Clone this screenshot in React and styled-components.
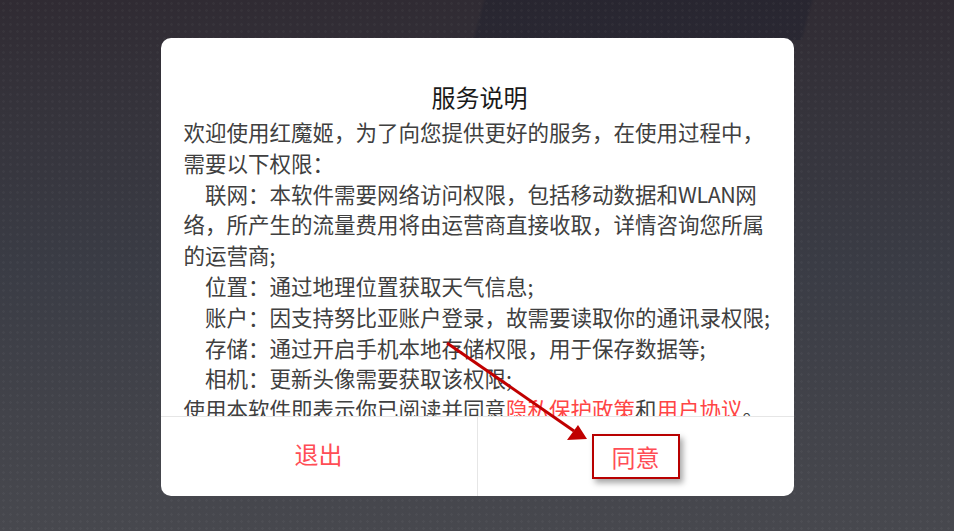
import React from "react";
import styled, { createGlobalStyle } from "styled-components";

const GlobalStyle = createGlobalStyle`
  html, body {
    margin: 0;
    padding: 0;
  }
  body {
    font-family: "Noto Sans CJK SC", "Noto Sans", sans-serif;
  }
`;

const Page = styled.div`
  position: relative;
  width: 954px;
  height: 531px;
  overflow: hidden;
  display: flex;
  justify-content: center;
  align-items: flex-start;
  padding-top: 38px;
  box-sizing: border-box;
  background:
    radial-gradient(circle, rgba(255, 255, 255, 0.03) 1px, transparent 1.6px) 0 0 / 7px 7px,
    linear-gradient(105deg, transparent 50%, rgba(22, 26, 42, 0.3) 50.4%, rgba(22, 26, 42, 0.3) 84%, transparent 84.4%) 0 0 / 100% 40px no-repeat,
    linear-gradient(180deg, #302b33 0%, #35333b 20%, #3a3c45 50%, #42434a 78%, #47484e 100%);
`;

const Dialog = styled.div`
  width: 633px;
  height: 458px;
  background: #fff;
  border-radius: 10px;
  display: flex;
  flex-direction: column;
  overflow: hidden;
`;

const Content = styled.div`
  flex: 1;
  overflow: hidden;
  padding: 42px 18px 0 23px;
`;

const Title = styled.h2`
  margin: 0 0 3px;
  text-align: center;
  font-size: 24px;
  font-weight: 400;
  line-height: 34px;
  color: #1a1a1a;
`;

const Para = styled.p`
  margin: 0;
  font-size: 21.5px;
  line-height: 30.8px;
  color: #404040;
  text-indent: ${(p) => (p.indent ? "1em" : "0")};
`;

const Latin = styled.span`
  letter-spacing: -0.5px;
`;

const Link = styled.span`
  color: #ff4545;
`;

const Footer = styled.div`
  height: 79px;
  flex-shrink: 0;
  display: flex;
  border-top: 1px solid #e6e6e6;
`;

const FooterButton = styled.div`
  flex: 1;
  display: flex;
  align-items: center;
  justify-content: center;
  padding-bottom: 6px;
  font-size: 24px;
  line-height: 30px;
  color: #ff4d55;
  & + & {
    border-left: 1px solid #e6e6e6;
  }
`;

const Highlight = styled.span`
  display: inline-block;
  border: 2px solid #b80000;
  padding: 0 18px;
  line-height: 41px;
  box-shadow: 3px 4px 6px rgba(0, 0, 0, 0.35);
  margin-top: 6px;
`;

const Annotation = styled.svg`
  position: absolute;
  left: 0;
  top: 0;
  pointer-events: none;
`;

const permissions = [
  <>
    联网：本软件需要网络访问权限，包括移动数据和<Latin>WLAN</Latin>网络，所产生的流量费用将由运营商直接收取，详情咨询您所属的运营商;
  </>,
  "位置：通过地理位置获取天气信息;",
  "账户：因支持努比亚账户登录，故需要读取你的通讯录权限;",
  "存储：通过开启手机本地存储权限，用于保存数据等;",
  "相机：更新头像需要获取该权限;",
];

export default function App() {
  return (
    <>
      <GlobalStyle />
      <Page>
        <Dialog>
          <Content>
            <Title>服务说明</Title>
            <Para>欢迎使用红魔姬，为了向您提供更好的服务，在使用过程中，需要以下权限：</Para>
            {permissions.map((text, i) => (
              <Para key={i} indent>
                {text}
              </Para>
            ))}
            <Para>
              使用本软件即表示你已阅读并同意<Link>隐私保护政策</Link>和<Link>用户协议</Link>。
            </Para>
          </Content>
          <Footer>
            <FooterButton>退出</FooterButton>
            <FooterButton>
              <Highlight>同意</Highlight>
            </FooterButton>
          </Footer>
        </Dialog>
        <Annotation width="954" height="531" viewBox="0 0 954 531">
          <line x1="447" y1="343" x2="574" y2="431" stroke="#c00000" strokeWidth="3" />
          <polygon points="587,439 567,440 578,425" fill="#c00000" />
        </Annotation>
      </Page>
    </>
  );
}
